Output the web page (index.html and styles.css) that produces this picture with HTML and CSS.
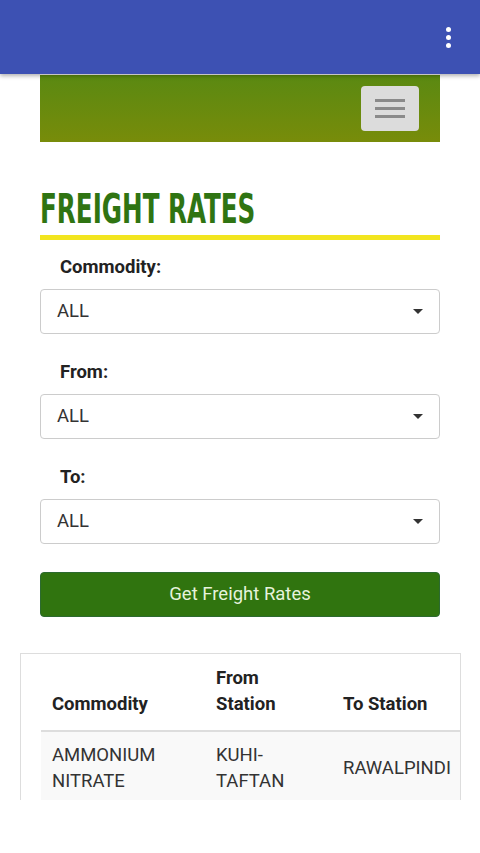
FILE: index.html
```html
<!DOCTYPE html>
<html lang="en">
<head>
    <meta charset="UTF-8">
    <title>Freight Rates</title>
    <link rel="stylesheet" href="styles.css">
</head>
<body>
    <div class="appbar">
        <div class="kebab"><span></span><span></span><span></span></div>
    </div>
    <div class="page">
        <div class="banner">
            <div class="toggler"><span></span><span></span><span></span></div>
        </div>
        <h2 class="title"><span>FREIGHT RATES</span></h2>
        <div class="field">
            <label>Commodity:</label>
            <div class="select">ALL<i class="caret"></i></div>
        </div>
        <div class="field">
            <label>From:</label>
            <div class="select">ALL<i class="caret"></i></div>
        </div>
        <div class="field">
            <label>To:</label>
            <div class="select">ALL<i class="caret"></i></div>
        </div>
        <div class="btn">Get Freight Rates</div>
        <div class="table-wrap">
            <table>
                <thead>
                    <tr>
                        <th class="c1">Commodity</th>
                        <th class="c2">From Station</th>
                        <th class="c3">To Station</th>
                    </tr>
                </thead>
                <tbody>
                    <tr>
                        <td>AMMONIUM NITRATE</td>
                        <td>KUHI-TAFTAN</td>
                        <td>RAWALPINDI</td>
                    </tr>
                </tbody>
            </table>
        </div>
    </div>
</body>
</html>
```

FILE: styles.css
```css
body{
    margin: 0;
    font-family: Roboto, "Liberation Sans", sans-serif;
    font-size: 18.5px;
    color: #333;
    background: #fff;
}
/* 顶部栏 */
.appbar{
    position: relative;
    z-index: 2;
    height: 74px;
    background-color: #3d51b3;
    box-shadow: 0 2px 4px rgba(0,0,0,0.3);
    display: flex;
    justify-content: flex-end;
    align-items: center;
}
.kebab{
    display: flex;
    flex-direction: column;
    gap: 3px;
    margin-right: 29px;
    margin-top: 1px;
}
.kebab span{
    display: block;
    width: 5px;
    height: 5px;
    border-radius: 50%;
    background: #fff;
}
.page{
    padding: 0 40px;
}
/* 绿色横幅 */
.banner{
    height: 67px;
    margin-top: 1px;
    background-image: linear-gradient(#5a8912, #788c0a);
    display: flex;
    justify-content: flex-end;
    align-items: flex-start;
    padding: 11px 21px 0 0;
    box-sizing: border-box;
}
.toggler{
    width: 58px;
    height: 45px;
    background-color: #dcdcdc;
    border-radius: 4px;
    display: flex;
    flex-direction: column;
    justify-content: center;
    align-items: center;
    gap: 5px;
}
.toggler span{
    display: block;
    width: 30px;
    height: 3px;
    background: #8a8a8a;
}
/* 标题 */
.title{
    margin: 47px 0 15px;
    padding-bottom: 5px;
    border-bottom: 5px solid #f2e51f;
    font-family: "DejaVu Sans", sans-serif;
    font-stretch: condensed;
    font-weight: bold;
    font-size: 41px;
    line-height: 41px;
    color: #2f7412;
    white-space: nowrap;
}
.title span{
    display: inline-block;
    transform: scaleX(0.668);
    transform-origin: left;
}
.field{
    margin-bottom: 26px;
}
.field label{
    display: block;
    padding-left: 20px;
    margin-bottom: 10px;
    font-weight: bold;
    line-height: 24px;
    color: #222;
}
.select{
    position: relative;
    height: 45px;
    box-sizing: border-box;
    border: 1px solid #ccc;
    border-radius: 4px;
    padding-left: 16px;
    line-height: 43px;
    color: #333;
}
.caret{
    position: absolute;
    right: 16px;
    top: 19px;
    width: 0;
    height: 0;
    border-left: 5px solid transparent;
    border-right: 5px solid transparent;
    border-top: 5px solid #333;
}
/* 按钮 */
.btn{
    margin-top: 28px;
    height: 45px;
    box-sizing: border-box;
    border: 1px solid #2c6a30;
    border-radius: 4px;
    background-color: #30740f;
    color: #e6f3dc;
    text-align: center;
    line-height: 43px;
}
/* 表格 */
.table-wrap{
    margin: 36px -21px 0 -20px;
    height: 146px;
    border: 1px solid #ddd;
    border-bottom: none;
    padding-left: 20px;
    overflow: hidden;
}
table{
    border-collapse: collapse;
    table-layout: fixed;
    width: 443px;
}
th, td{
    text-align: left;
    padding: 11px 11px 13px;
    line-height: 26px;
}
th{
    vertical-align: bottom;
    font-weight: bold;
    color: #222;
    border-bottom: 2px solid #ddd;
}
td{
    vertical-align: middle;
    padding-top: 10px;
    background-color: #f9f9f9;
}
.c1{ width: 142px; }
.c2{ width: 105px; }
.c3{ width: 130px; }
```
